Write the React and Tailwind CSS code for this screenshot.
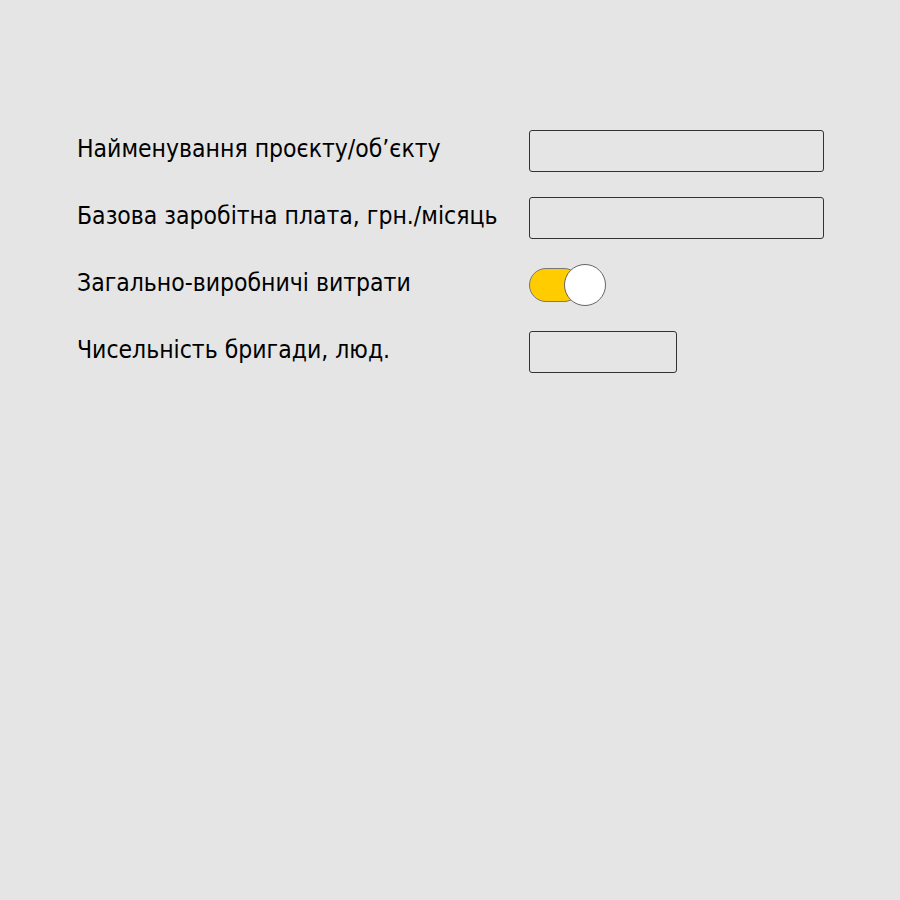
import React, { useState } from 'react';

const fields = [
  { label: "Найменування проєкту/об’єкту", type: "text", width: "w-[295px]" },
  { label: "Базова заробітна плата, грн./місяць", type: "text", width: "w-[295px]" },
  { label: "Загально-виробничі витрати", type: "toggle" },
  { label: "Чисельність бригади, люд.", type: "text", width: "w-[148px]" },
];

const Toggle = ({ on, onChange }) => (
  <button
    type="button"
    onClick={() => onChange(!on)}
    className="relative w-[77px] h-[42px] flex items-center"
  >
    <span
      className={
        on
          ? "w-[52px] h-[34px] rounded-full bg-[#ffcc00] border border-[#777]"
          : "w-[52px] h-[34px] rounded-full bg-[#cccccc] border border-[#777]"
      }
    />
    <span
      className={
        on
          ? "absolute right-0 top-0 w-[42px] h-[42px] rounded-full bg-white border border-[#666]"
          : "absolute left-0 top-0 w-[42px] h-[42px] rounded-full bg-white border border-[#666]"
      }
    />
  </button>
);

export default function App() {
  const [values, setValues] = useState({ 0: "", 1: "", 3: "" });
  const [overhead, setOverhead] = useState(true);

  return (
    <div className="w-[900px] h-[900px] bg-[#e5e5e5] pl-[77px] pt-[130px] text-black">
      <div className="grid grid-cols-[452px_295px] gap-y-[25px]">
        {fields.map((f, i) => (
          <React.Fragment key={i}>
            <label className="text-[24.5px] leading-[37px] [font-stretch:condensed] font-['DejaVu_Sans_Condensed','DejaVu_Sans',sans-serif] whitespace-nowrap">
              {f.label}
            </label>
            <div className="h-[42px] flex items-center">
              {f.type === "toggle" ? (
                <Toggle on={overhead} onChange={setOverhead} />
              ) : (
                <input
                  type="text"
                  value={values[i]}
                  onChange={(e) => setValues({ ...values, [i]: e.target.value })}
                  className={`${f.width} h-[42px] bg-transparent border border-[#333] rounded-[3px] px-2 outline-none`}
                />
              )}
            </div>
          </React.Fragment>
        ))}
      </div>
    </div>
  );
}
